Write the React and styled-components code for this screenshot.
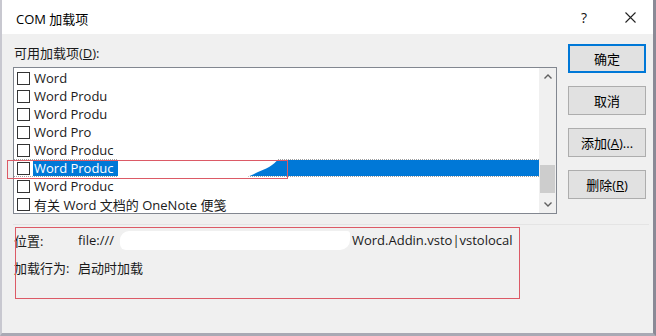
import React from "react";
import styled, { createGlobalStyle } from "styled-components";

const GlobalStyle = createGlobalStyle`
  html, body {
    margin: 0;
    padding: 0;
    background: #ffffff;
  }
  body {
    font-family: "Open Sans", "Noto Sans CJK SC", sans-serif;
    font-size: 13px;
    color: #1a1a1a;
  }
`;

const Dialog = styled.div`
  position: relative;
  width: 656px;
  height: 336px;
  box-sizing: border-box;
  background: #f0f0f0;
  border-left: 2px solid #c8c8d0;
  border-right: 3px solid #8a8a96;
  border-bottom: 3px solid #a9a9b4;
  display: flex;
  flex-direction: column;
  overflow: hidden;
`;

const TitleBar = styled.div`
  height: 34px;
  flex: none;
  background: #ffffff;
  display: flex;
  align-items: center;
  padding-left: 14px;
`;

const Title = styled.div`
  flex: 1;
  font-size: 13px;
  color: #000;
  padding-top: 2px;
`;

const TitleButton = styled.div`
  width: 46px;
  height: 34px;
  display: flex;
  align-items: center;
  justify-content: center;
  font-size: 14px;
  color: #111;
`;

const Main = styled.div`
  display: flex;
  padding: 10px 0 0 11px;
  gap: 11px;
`;

const LeftColumn = styled.div`
  width: 544px;
  display: flex;
  flex-direction: column;
`;

const FieldLabel = styled.div`
  height: 18px;
  line-height: 18px;
  padding-left: 1px;
  margin-bottom: 5px;
  u {
    text-decoration: underline;
  }
`;

const ListBox = styled.div`
  height: 147px;
  box-sizing: border-box;
  border: 1px solid #828790;
  background: #fff;
  display: flex;
`;

const Rows = styled.div`
  flex: 1;
  padding-top: 1px;
`;

const Row = styled.div`
  position: relative;
  height: 18px;
  box-sizing: border-box;
  display: flex;
  align-items: center;
  padding-left: 3px;
  border-top: 1px dotted ${(p) => (p.$focused ? "#a0a0a0" : "transparent")};
  border-bottom: 1px dotted ${(p) => (p.$focused ? "#a0a0a0" : "transparent")};
`;

const Check = styled.span`
  width: 13px;
  height: 13px;
  box-sizing: border-box;
  border: 1px solid #333;
  background: #fff;
  flex: none;
`;

const RowText = styled.span`
  flex: 1;
  align-self: stretch;
  display: flex;
  align-items: center;
  margin-left: 3px;
  padding-left: 1px;
  white-space: nowrap;
  background: ${(p) => (p.$selected ? "#0078d7" : "transparent")};
  color: ${(p) => (p.$selected ? "#fff" : "#1a1a1a")};
`;

const Redaction = styled.svg`
  position: absolute;
  top: -1px;
  left: 104px;
`;

const ScrollBar = styled.div`
  width: 17px;
  background: #f0f0f0;
  display: flex;
  flex-direction: column;
`;

const ScrollArrow = styled.div`
  height: 17px;
  display: flex;
  align-items: center;
  justify-content: center;
`;

const ScrollTrack = styled.div`
  flex: 1;
  padding-top: 80px;
`;

const Thumb = styled.div`
  height: 28px;
  margin: 0 1px;
  background: #cdcdcd;
`;

const RightColumn = styled.div`
  display: flex;
  flex-direction: column;
  gap: 13px;
`;

const Button = styled.div`
  width: 78px;
  height: 29px;
  box-sizing: border-box;
  display: flex;
  align-items: center;
  justify-content: center;
  background: #e1e1e1;
  border: ${(p) => (p.$default ? "2px solid #0078d7" : "1px solid #adadad")};
  font-size: 13px;
  color: #000;
  u {
    text-decoration: underline;
  }
`;

const Separator = styled.div`
  height: 1px;
  background: #e4e4e4;
  margin: 10px 4px 0 11px;
`;

const Info = styled.div`
  padding: 6px 0 0 12px;
  display: flex;
  flex-direction: column;
  gap: 9px;
`;

const InfoRow = styled.div`
  display: flex;
  align-items: center;
  height: 18px;
  white-space: nowrap;
`;

const InfoLabel = styled.span`
  width: 64px;
  flex: none;
`;

const Blot = styled.span`
  display: inline-block;
  width: 230px;
  height: 19px;
  margin: 0 2px 0 6px;
  background: #fff;
  border-radius: 9px 3px 10px 6px;
`;

const Marker = styled.div`
  position: absolute;
  left: ${(p) => p.$x}px;
  top: ${(p) => p.$y}px;
  width: ${(p) => p.$w}px;
  height: ${(p) => p.$h}px;
  border: 1px solid #dc5a66;
  pointer-events: none;
`;

const Chevron = ({ up }) => (
  <svg width="8" height="5" viewBox="0 0 8 5">
    <path
      d={up ? "M0.5 4.5 L4 1 L7.5 4.5" : "M0.5 0.5 L4 4 L7.5 0.5"}
      fill="none"
      stroke="#606060"
      strokeWidth="1.4"
    />
  </svg>
);

const items = [
  { text: "Word" },
  { text: "Word Produ" },
  { text: "Word Produ" },
  { text: "Word Pro" },
  { text: "Word Produc" },
  { text: "Word Produc", selected: true },
  { text: "Word Produc" },
  { text: "有关 Word 文档的 OneNote 便笺" },
];

export default function App() {
  return (
    <>
      <GlobalStyle />
      <Dialog>
        <TitleBar>
          <Title>COM 加载项</Title>
          <TitleButton>?</TitleButton>
          <TitleButton>
            <svg width="11" height="11" viewBox="0 0 11 11">
              <path d="M0.5 0.5 L10.5 10.5 M10.5 0.5 L0.5 10.5" stroke="#222" strokeWidth="1.1" />
            </svg>
          </TitleButton>
        </TitleBar>

        <Main>
          <LeftColumn>
            <FieldLabel>
              可用加载项(<u>D</u>):
            </FieldLabel>
            <ListBox>
              <Rows>
                {items.map((item, index) => (
                  <Row key={index} $focused={item.selected}>
                    <Check />
                    <RowText $selected={item.selected}>{item.text}</RowText>
                    {item.selected && (
                      <Redaction width="180" height="20" viewBox="0 0 180 20">
                        <path
                          d="M0 0 L160 0 C156 6 148 10 140 13 C134 16 130 18 126 19 L120 20 L0 20 Z"
                          fill="#ffffff"
                        />
                      </Redaction>
                    )}
                  </Row>
                ))}
              </Rows>
              <ScrollBar>
                <ScrollArrow>
                  <Chevron up />
                </ScrollArrow>
                <ScrollTrack>
                  <Thumb />
                </ScrollTrack>
                <ScrollArrow>
                  <Chevron />
                </ScrollArrow>
              </ScrollBar>
            </ListBox>
          </LeftColumn>

          <RightColumn>
            <Button $default>确定</Button>
            <Button>取消</Button>
            <Button>
              添加(<u>A</u>)...
            </Button>
            <Button>
              删除(<u>R</u>)
            </Button>
          </RightColumn>
        </Main>

        <Separator />

        <Info>
          <InfoRow>
            <InfoLabel>位置:</InfoLabel>
            <span>file:///</span>
            <Blot />
            <span>Word.Addin.vsto|vstolocal</span>
          </InfoRow>
          <InfoRow>
            <InfoLabel>加载行为:</InfoLabel>
            <span>启动时加载</span>
          </InfoRow>
        </Info>

        <Marker $x={5} $y={160} $w={279} $h={17} />
        <Marker $x={13} $y={227} $w={503} $h={70} />
      </Dialog>
    </>
  );
}
